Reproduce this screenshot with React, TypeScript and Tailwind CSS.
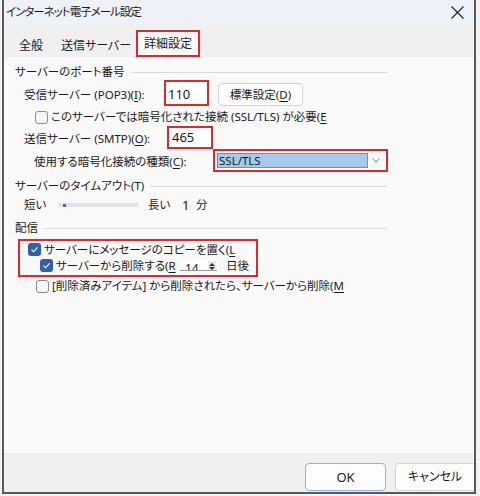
import React from "react";

const font = "[font-family:'Noto_Sans','Noto_Sans_CJK_JP',sans-serif] [font-feature-settings:'palt']";

function U({ children }: { children: React.ReactNode }) {
  return <span className="underline underline-offset-2">{children}</span>;
}

function Check({ checked = false }: { checked?: boolean }) {
  return checked ? (
    <span className="flex h-[13px] w-[13px] shrink-0 items-center justify-center rounded-[3px] bg-[#2c5fb8]">
      <svg width="9" height="9" viewBox="0 0 9 9">
        <path d="M1.5 4.6 L3.6 6.6 L7.6 2.4" fill="none" stroke="#fff" strokeWidth="1.1" />
      </svg>
    </span>
  ) : (
    <span className="h-[13px] w-[13px] shrink-0 rounded-[3px] border border-[#8c8c8c] bg-[#f6f6f6]" />
  );
}

function Header({ label }: { label: string }) {
  return (
    <div className="flex h-[16px] w-[372px] items-center gap-[6px]">
      <span className="whitespace-nowrap">{label}</span>
      <div className="h-px flex-1 bg-[#dadada]" />
    </div>
  );
}

export default function App() {
  return (
    <div className={`h-[496px] w-[480px] bg-[#f3f3f3] text-[11.5px] leading-none text-[#1b1b1b] ${font}`}>
      <div className="ml-[2px] flex h-[494px] w-[474px] flex-col border-x-2 border-b-2 border-[#595959] bg-[#f0f0f0]">
        {/* title bar */}
        <div className="flex h-[24px] items-center justify-between bg-[#eff1f8] pl-[2px] pr-[10px]">
          <span className="whitespace-nowrap text-[11.5px] tracking-[-1px]">インターネット電子メール設定</span>
          <svg width="13" height="13" viewBox="0 0 13 13">
            <path d="M0.5 0.5 L12.5 12.5 M12.5 0.5 L0.5 12.5" stroke="#222" strokeWidth="1.1" />
          </svg>
        </div>

        {/* tabs */}
        <div className="flex h-[33px] items-end bg-[#f0f0f0] pl-[2px]">
          <div className="flex h-[26px] w-[50px] items-center justify-center pt-[3px] text-[12px]">全般</div>
          <div className="flex h-[26px] w-[80px] items-center justify-center pt-[3px] text-[12px]">送信サーバー</div>
          <div className="flex h-[27px] w-[64px] items-center justify-center border-2 border-[#e1262e] bg-[#f9f9f9] pt-[1px] text-[12px]">
            詳細設定
          </div>
        </div>

        {/* panel */}
        <div className="flex h-[396px] flex-col bg-[#f9f9f9] pl-[11px] pt-[7px]">
          <Header label="サーバーのポート番号" />

          <div className="flex h-[26px] items-center pl-[9px]">
            <span className="w-[140px] shrink-0 whitespace-nowrap pt-[3px]">
              受信サーバー (POP3)(<U>I</U>):
            </span>
            <div className="flex h-[26px] w-[45px] shrink-0 items-center border-2 border-[#e1262e] bg-white pl-[2px] pt-[2px] text-[13px]">
              110
            </div>
            <button className="ml-[9px] mt-[3px] flex h-[23px] w-[85px] shrink-0 items-center justify-center whitespace-nowrap rounded-[4px] border border-[#d4d4d4] bg-[#fdfdfd]">
              標準設定(<U>D</U>)
            </button>
          </div>

          <div className="flex h-[20px] items-center gap-[3px] pl-[20px] pt-[2px]">
            <Check />
            <span className="whitespace-nowrap">
              このサーバーでは暗号化された接続 (SSL/TLS) が必要(<U>E</U>
            </span>
          </div>

          <div className="flex h-[23px] items-center pl-[9px]">
            <span className="w-[143px] shrink-0 whitespace-nowrap pt-[2px]">
              送信サーバー (SMTP)(<U>O</U>):
            </span>
            <div className="flex h-[23px] w-[46px] shrink-0 items-center border-2 border-[#e1262e] bg-white pl-[3px] text-[13px]">
              465
            </div>
          </div>

          <div className="flex h-[23px] items-center pl-[19px]">
            <span className="w-[179px] shrink-0 whitespace-nowrap pt-[2px]">
              使用する暗号化接続の種類(<U>C</U>):
            </span>
            <div className="flex h-[23px] w-[175px] shrink-0 items-center border-2 border-[#e1262e] bg-white pl-[2px] pr-[2px]">
              <div className="flex h-[15px] w-[151px] items-center border border-[#6f8fb5] bg-[#a6c8ec] pl-[1px]">
                SSL/TLS
              </div>
              <div className="flex flex-1 items-center justify-center">
                <svg width="8" height="5" viewBox="0 0 8 5">
                  <path d="M0.5 0.5 L4 4 L7.5 0.5" fill="none" stroke="#777" strokeWidth="0.9" />
                </svg>
              </div>
            </div>
          </div>

          <div className="mt-[6px]">
            <Header label="サーバーのタイムアウト(T)" />
          </div>

          <div className="flex h-[22px] items-center pl-[9px]">
            <span className="w-[34px] shrink-0">短い</span>
            <div className="flex h-[4px] w-[80px] shrink-0 items-center bg-[#e3e3e3] pl-[5px]">
              <div className="h-[3px] w-[3px] bg-[#3b6fc2]" />
            </div>
            <span className="ml-[10px] w-[34px] shrink-0">長い</span>
            <span className="w-[14px] shrink-0 text-[13px]">1</span>
            <span>分</span>
          </div>

          <div className="mt-[4px]">
            <Header label="配信" />
          </div>

          <div className="ml-[3px] mt-[3px] flex h-[38px] w-[240px] flex-col border-2 border-[#e1262e]">
            <div className="flex h-[15px] items-center gap-[3px] pl-[8px] pt-[2px]">
              <Check checked />
              <span className="whitespace-nowrap">
                サーバーにメッセージのコピーを置く(<U>L</U>
              </span>
            </div>
            <div className="flex h-[19px] items-center pl-[20px]">
              <Check checked />
              <span className="ml-[3px] w-[124px] shrink-0 whitespace-nowrap">
                サーバーから削除する(<U>R</U>
              </span>
              <div className="flex h-[11px] w-[37px] shrink-0 items-start overflow-hidden border-b border-[#9a9a9a] bg-white">
                <span className="ml-[5px] mt-[3px] w-[23px] text-[12px]">14</span>
                <div className="mt-[1px] flex h-[10px] w-[8px] flex-col items-center justify-center gap-[1px] bg-[#e8e8e8]">
                  <svg width="6" height="3" viewBox="0 0 6 3"><path d="M0 3 L3 0 L6 3Z" fill="#333" /></svg>
                  <svg width="6" height="3" viewBox="0 0 6 3"><path d="M0 0 L3 3 L6 0Z" fill="#333" /></svg>
                </div>
              </div>
              <span className="ml-[9px] whitespace-nowrap">日後</span>
            </div>
          </div>

          <div className="flex h-[18px] items-center gap-[3px] pl-[21px]">
            <Check />
            <span className="whitespace-nowrap">
              [削除済みアイテム] から削除されたら、サーバーから削除(<U>M</U>
            </span>
          </div>
        </div>

        {/* bottom buttons */}
        <div className="flex flex-1 items-start justify-end gap-[9px] bg-[#f0f0f0] pt-[10px]">
          <button className="flex h-[28px] w-[81px] items-center justify-center rounded-[4px] border border-[#8fb2de] bg-[#fdfdfd] text-[13px]">
            OK
          </button>
          <button className="flex h-[28px] w-[79px] items-center justify-center whitespace-nowrap rounded-l-[4px] border border-r-0 border-[#d6d6d6] bg-[#fdfdfd] text-[12px]">
            キャンセル
          </button>
        </div>
      </div>
    </div>
  );
}
